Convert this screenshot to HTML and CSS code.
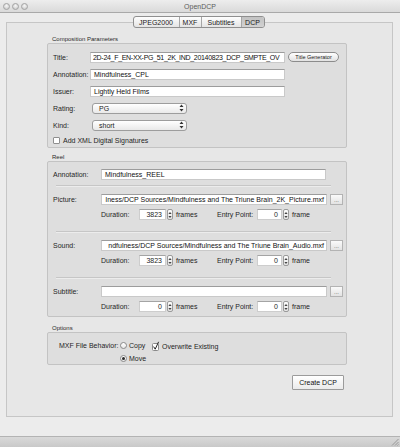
FILE: index.html
```html
<!DOCTYPE html>
<html>
<head>
<meta charset="utf-8">
<title>OpenDCP</title>
<link rel="stylesheet" href="styles.css">
</head>
<body>
<div class="titlebar">
  <div class="lights"><span></span><span></span><span></span></div>
  <div class="wtitle">OpenDCP</div>
  <div></div>
</div>
<div class="main">
  <div class="tabs">
    <span class="tab t1">JPEG2000</span><span class="tab t2">MXF</span><span class="tab t3">Subtitles</span><span class="tab t4 sel">DCP</span>
  </div>
  <div class="pane">
    <div class="legend">Composition Parameters</div>
    <div class="group comp">
      <div class="row">
        <span class="lbl">Title:</span>
        <span class="field w195 tight">2D-24_F_EN-XX-PG_51_2K_IND_20140823_DCP_SMPTE_OV</span>
        <span class="pill">Title Generator</span>
      </div>
      <div class="row">
        <span class="lbl">Annotation:</span>
        <span class="field w195">Mindfulness_CPL</span>
      </div>
      <div class="row">
        <span class="lbl">Issuer:</span>
        <span class="field w195">Lightly Held Films</span>
      </div>
      <div class="row">
        <span class="lbl">Rating:</span>
        <span class="combo"><span class="ctext">PG</span><svg class="carrow" width="5" height="8" viewBox="0 0 5 8"><path d="M2.5 0.5 L4.5 3 L0.5 3 Z M2.5 7.5 L4.5 5 L0.5 5 Z" fill="#333"/></svg></span>
      </div>
      <div class="row">
        <span class="lbl">Kind:</span>
        <span class="combo"><span class="ctext">short</span><svg class="carrow" width="5" height="8" viewBox="0 0 5 8"><path d="M2.5 0.5 L4.5 3 L0.5 3 Z M2.5 7.5 L4.5 5 L0.5 5 Z" fill="#333"/></svg></span>
      </div>
      <div class="row crow">
        <span class="check"></span>
        <span class="ctl">Add XML Digital Signatures</span>
      </div>
    </div>

    <div class="legend gap">Reel</div>
    <div class="group reel">
      <div class="row">
        <span class="lbl2">Annotation:</span>
        <span class="field w225">Mindfulness_REEL</span>
      </div>
      <div class="sep"></div>

      <div class="media">
        <div class="row">
          <span class="lbl2">Picture:</span>
          <span class="field w226 rtl"><span>lness/DCP Sources/Mindfulness and The Triune Brain_2K_Picture.mxf</span></span>
          <span class="dots">...</span>
        </div>
        <div class="dur">
          <div class="dpart">
            <span class="dl">Duration:</span>
            <span class="spin w27">3823</span>
            <span class="stepper"><svg width="4" height="8" viewBox="0 0 4 8"><path d="M2 1 L3.6 3 L0.4 3 Z M2 7 L3.6 5 L0.4 5 Z" fill="#444"/></svg></span>
            <span class="unit">frames</span>
          </div>
          <span class="el">Entry Point:</span>
          <span class="spin w25">0</span>
          <span class="stepper"><svg width="4" height="8" viewBox="0 0 4 8"><path d="M2 1 L3.6 3 L0.4 3 Z M2 7 L3.6 5 L0.4 5 Z" fill="#444"/></svg></span>
          <span class="unit">frame</span>
        </div>
      </div>
      <div class="sep sep2"></div>

      <div class="media">
        <div class="row">
          <span class="lbl2">Sound:</span>
          <span class="field w226 rtl"><span>ndfulness/DCP Sources/Mindfulness and The Triune Brain_Audio.mxf</span></span>
          <span class="dots">...</span>
        </div>
        <div class="dur">
          <div class="dpart">
            <span class="dl">Duration:</span>
            <span class="spin w27">3823</span>
            <span class="stepper"><svg width="4" height="8" viewBox="0 0 4 8"><path d="M2 1 L3.6 3 L0.4 3 Z M2 7 L3.6 5 L0.4 5 Z" fill="#444"/></svg></span>
            <span class="unit">frames</span>
          </div>
          <span class="el">Entry Point:</span>
          <span class="spin w25">0</span>
          <span class="stepper"><svg width="4" height="8" viewBox="0 0 4 8"><path d="M2 1 L3.6 3 L0.4 3 Z M2 7 L3.6 5 L0.4 5 Z" fill="#444"/></svg></span>
          <span class="unit">frame</span>
        </div>
      </div>
      <div class="sep sep2"></div>

      <div class="media">
        <div class="row">
          <span class="lbl2">Subtitle:</span>
          <span class="field w226"></span>
          <span class="dots">...</span>
        </div>
        <div class="dur">
          <div class="dpart">
            <span class="dl">Duration:</span>
            <span class="spin w27">0</span>
            <span class="stepper"><svg width="4" height="8" viewBox="0 0 4 8"><path d="M2 1 L3.6 3 L0.4 3 Z M2 7 L3.6 5 L0.4 5 Z" fill="#444"/></svg></span>
            <span class="unit">frames</span>
          </div>
          <span class="el">Entry Point:</span>
          <span class="spin w25">0</span>
          <span class="stepper"><svg width="4" height="8" viewBox="0 0 4 8"><path d="M2 1 L3.6 3 L0.4 3 Z M2 7 L3.6 5 L0.4 5 Z" fill="#444"/></svg></span>
          <span class="unit">frame</span>
        </div>
      </div>
    </div>

    <div class="legend gap2">Options</div>
    <div class="group opts">
      <span class="olbl">MXF File Behavior:</span>
      <span class="radio-item"><span class="radio"></span><span>Copy</span></span>
      <span class="chk-item">
        <svg class="cbox" width="9" height="10" viewBox="0 0 9 10"><rect x="0.5" y="2.5" width="6" height="7" rx="1" fill="#fff" stroke="#8a8a8a"/><path d="M1.6 5.6 L3.2 8.2 L6.6 0.8" fill="none" stroke="#222" stroke-width="1"/></svg>
        <span>Overwrite Existing</span>
      </span>
      <span class="radio-item r2"><span class="radio on"></span><span>Move</span></span>
    </div>

    <div class="actions">
      <span class="btn">Create DCP</span>
    </div>
  </div>
</div>
<div class="bottombar">
  <svg width="8" height="8" viewBox="0 0 8 8"><path d="M7.5 1 L1 7.5 M7.5 4 L4 7.5 M7.5 6.5 L6.5 7.5" stroke="#8c8c8c" stroke-width="0.8"/></svg>
</div>
</body>
</html>
```

FILE: styles.css
```css
* { box-sizing: border-box; }
html, body { margin: 0; padding: 0; }
body {
  width: 400px;
  height: 447px;
  overflow: hidden;
  background: #ececec;
  font-family: "Liberation Sans", Arial, sans-serif;
  font-size: 7px;
  color: #1e1e1e;
  display: flex;
  flex-direction: column;
}

/* window title bar */
.titlebar {
  height: 13px;
  flex: none;
  display: grid;
  grid-template-columns: 1fr auto 1fr;
  align-items: center;
  padding: 0 3px;
  background: linear-gradient(#ededed, #dadada);
  border-bottom: 1px solid #a9a9a9;
}
.lights { display: flex; gap: 2px; }
.lights span {
  width: 7px;
  height: 7px;
  border-radius: 50%;
  border: 1px solid #a3a3a3;
  background: radial-gradient(circle at 50% 35%, #f7f7f7, #c4c4c4);
}
.wtitle { color: #5c5c5c; font-size: 7px; }

.main {
  flex: 1;
  display: flex;
  flex-direction: column;
  padding: 0 7px 0 6px;
}

/* segmented tabs */
.tabs {
  align-self: center;
  display: flex;
  margin-top: 3px;
  margin-left: -2px;
  height: 12px;
  border: 1px solid #8f8f8f;
  border-radius: 3px;
  background: linear-gradient(#fefefe, #e4e4e4);
  position: relative;
  z-index: 1;
  overflow: hidden;
}
.tab {
  display: flex;
  align-items: center;
  justify-content: center;
  color: #1a1a1a;
  border-left: 1px solid #a6a6a6;
}
.tab.t1 { width: 45px; border-left: none; }
.tab.t2 { width: 22px; }
.tab.t3 { width: 40px; }
.tab.t4 { width: 23px; }
.tab.sel { background: linear-gradient(#c2c2c2, #d2d2d2); }

/* tab pane */
.pane {
  margin-top: -6px;
  height: 395px;
  border: 1px solid #c6c6c6;
  background: #e7e7e7;
  padding: 12px 45px 0 40px;
  display: flex;
  flex-direction: column;
}
.legend {
  height: 8px;
  line-height: 8px;
  font-size: 6px;
  padding-left: 5px;
  color: #2a2a2a;
}
.legend.gap { margin-top: 5px; }
.legend.gap2 { margin-top: 7px; }

.group {
  border: 1px solid #c3c3c3;
  border-radius: 2px;
  background: #dedede;
}

.row {
  display: flex;
  align-items: center;
  height: 12px;
}
.comp { padding: 7px 5px 3px 5px; }
.comp .row { margin-bottom: 5px; }
.comp .row.crow { height: 8px; margin-bottom: 0; }
.lbl { width: 37px; flex: none; }
.lbl2 { width: 48px; flex: none; }

.field {
  height: 11px;
  line-height: 10px;
  background: #fff;
  border: 1px solid #c9c9c9;
  border-top-color: #9c9c9c;
  padding: 0 3px;
  white-space: nowrap;
  overflow: hidden;
  color: #111;
  flex: none;
}
.field.tight { letter-spacing: -0.3px; padding: 0 2px; }
.field.rtl { display: flex; justify-content: flex-end; padding: 0 2px 0 0; }
.field.rtl span { flex: none; }
.w195 { width: 195px; }
.w225 { width: 225px; }
.w226 { width: 226px; }

.pill {
  margin-left: 3px;
  width: 51px;
  height: 10px;
  border-radius: 5px;
  border: 1px solid #8c8c8c;
  background: linear-gradient(#ffffff, #e2e2e2);
  font-size: 5.5px;
  display: flex;
  align-items: center;
  justify-content: center;
  color: #222;
}

.combo {
  margin-left: 2px;
  width: 95px;
  height: 11px;
  border: 1px solid #9d9d9d;
  border-radius: 3px;
  background: linear-gradient(#ffffff, #e9e9e9);
  display: flex;
  align-items: center;
  padding: 0 2px 0 6px;
}
.ctext { flex: 1; }
.carrow { flex: none; }

.check {
  width: 7px;
  height: 7px;
  border: 1px solid #8f8f8f;
  border-radius: 1px;
  background: #fff;
  margin-right: 3px;
  flex: none;
}

/* reel */
.reel { padding: 6px 5px 4px 5px; }
.sep {
  height: 1px;
  margin: 5px 10px 0 3px;
  background: #c6c6c6;
  box-shadow: 0 1px 0 #ececec;
}
.sep2 { margin-top: 11px; }
.media { margin-top: 7px; }
.dots {
  margin-left: 3px;
  width: 13px;
  height: 11px;
  border: 1px solid #b3b3b3;
  background: linear-gradient(#fafafa, #e3e3e3);
  font-size: 6px;
  color: #555;
  display: flex;
  align-items: flex-end;
  justify-content: center;
  line-height: 8px;
  flex: none;
}
.dur {
  margin-top: 4px;
  height: 11px;
  display: flex;
  align-items: center;
  padding-left: 48px;
}
.dpart { width: 116px; display: flex; align-items: center; flex: none; }
.dl { width: 38px; flex: none; }
.el { width: 40px; flex: none; }
.spin {
  height: 11px;
  line-height: 10px;
  background: #fff;
  border: 1px solid #cdcdcd;
  border-top-color: #a4a4a4;
  text-align: right;
  padding-right: 3px;
  flex: none;
}
.w27 { width: 27px; }
.w25 { width: 25px; }
.stepper {
  margin-left: 1px;
  width: 6px;
  height: 11px;
  border: 1px solid #9a9a9a;
  border-radius: 2px;
  background: linear-gradient(#fdfdfd, #e4e4e4);
  display: flex;
  align-items: center;
  justify-content: center;
  flex: none;
}
.unit { margin-left: 3px; }

/* options */
.opts {
  padding: 8px 0 1px 11px;
  display: grid;
  grid-template-columns: 61px 32px auto;
  grid-template-rows: 9px 9px;
  row-gap: 4px;
  align-items: center;
}
.olbl { grid-column: 1; grid-row: 1; }
.radio-item { display: flex; align-items: center; gap: 2px; grid-column: 2; grid-row: 1; }
.radio-item.r2 { grid-row: 2; }
.radio {
  width: 7px;
  height: 7px;
  border-radius: 50%;
  border: 1px solid #8a8a8a;
  background: linear-gradient(#ffffff, #e8e8e8);
  display: flex;
  align-items: center;
  justify-content: center;
  flex: none;
}
.radio.on::after {
  content: "";
  width: 3px;
  height: 3px;
  border-radius: 50%;
  background: #2a2a2a;
}
.chk-item { grid-column: 3; grid-row: 1; display: flex; align-items: flex-end; gap: 1px; }
.cbox { flex: none; margin-bottom: -1px; }

.actions {
  margin-top: 10px;
  display: flex;
  justify-content: flex-end;
  padding-right: 3px;
}
.btn {
  width: 52px;
  height: 15px;
  border: 1px solid #9b9b9b;
  border-radius: 1px;
  background: linear-gradient(#ffffff, #ebebeb);
  display: flex;
  align-items: center;
  justify-content: center;
  font-size: 7px;
  color: #111;
}

.bottombar {
  height: 11px;
  flex: none;
  border-top: 1px solid #b3b3b3;
  background: linear-gradient(#d9d9d9, #c9c9c9);
  display: flex;
  justify-content: flex-end;
  align-items: flex-end;
  padding: 0 1px 1px 0;
}
```
